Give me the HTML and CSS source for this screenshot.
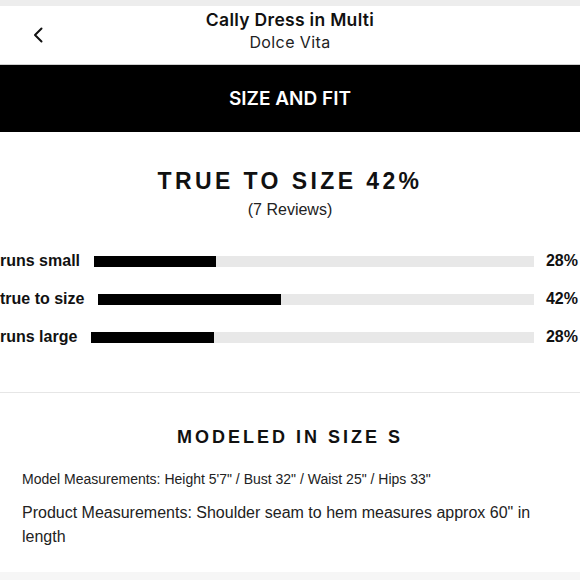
FILE: index.html
```html
<!DOCTYPE html>
<html lang="en">
<head>
<meta charset="utf-8">
<title>Size and Fit</title>
<link rel="stylesheet" href="styles.css">
</head>
<body>
<div class="page">
  <div class="top-strip"></div>
  <header class="header">
    <button class="back" aria-label="Back">
      <svg width="12" height="16" viewBox="0 0 12 16"><path d="M9.5 1.5 L3 8 L9.5 14.5" fill="none" stroke="#111" stroke-width="2" stroke-linecap="round" stroke-linejoin="round"/></svg>
    </button>
    <div class="titles">
      <div class="title">Cally Dress in Multi</div>
      <div class="brand">Dolce Vita</div>
    </div>
  </header>
  <div class="banner">SIZE AND FIT</div>

  <section class="fit">
    <h2 class="heading">TRUE TO SIZE 42%</h2>
    <div class="reviews">(7 Reviews)</div>
    <div class="rows">
      <div class="row">
        <span class="label">runs small</span>
        <div class="track"><div class="fill" style="width:27.8%"></div></div>
        <span class="pct">28%</span>
      </div>
      <div class="row">
        <span class="label">true to size</span>
        <div class="track"><div class="fill" style="width:41.8%"></div></div>
        <span class="pct">42%</span>
      </div>
      <div class="row">
        <span class="label">runs large</span>
        <div class="track"><div class="fill" style="width:27.8%"></div></div>
        <span class="pct">28%</span>
      </div>
    </div>
  </section>

  <section class="model">
    <h2 class="heading small">MODELED IN SIZE S</h2>
    <p class="model-meas">Model Measurements: Height 5'7" / Bust 32" / Waist 25" / Hips 33"</p>
    <p class="prod-meas">Product Measurements: Shoulder seam to hem measures approx 60" in length</p>
  </section>
  <div class="bottom-strip"></div>
</div>
</body>
</html>
```

FILE: styles.css
```css
* { box-sizing: border-box; }
html, body { margin: 0; padding: 0; background: #fff; }
body { font-family: "Liberation Sans", Arial, sans-serif; color: #111; }
.page { width: 580px; height: 580px; overflow: hidden; display: flex; flex-direction: column; }

.top-strip { height: 6px; background: #ededed; flex: none; }

.header {
  height: 59px;
  flex: none;
  display: flex;
  align-items: center;
  justify-content: center;
  border-bottom: 1px solid #cfcfcf;
  position: relative;
}
.back {
  position: absolute;
  left: 31px;
  top: 20px;
  width: 14px;
  height: 18px;
  padding: 0;
  border: 0;
  background: none;
  display: flex;
  align-items: center;
  justify-content: center;
}
.titles { text-align: center; margin-top: -8px; }
.title {
  font-family: Inter, "Noto Sans", sans-serif;
  font-weight: 600;
  font-size: 17.5px;
  line-height: 22px;
  letter-spacing: 0.3px;
  color: #111;
}
.brand {
  font-family: Inter, "Noto Sans", sans-serif;
  font-weight: 400;
  font-size: 16px;
  line-height: 22px;
  letter-spacing: 0.4px;
  color: #222;
}

.banner {
  height: 67px;
  flex: none;
  background: #000;
  color: #fff;
  display: flex;
  align-items: center;
  justify-content: center;
  font-family: Inter, "Noto Sans", sans-serif;
  font-weight: 600;
  font-size: 19px;
}

.fit { padding-top: 35px; padding-bottom: 36px; border-bottom: 1px solid #e6e6e6; flex: none; }
.heading {
  margin: 0;
  text-align: center;
  font-size: 23px;
  line-height: 28px;
  font-weight: 700;
  letter-spacing: 3.4px;
  color: #111;
}
.reviews {
  margin-top: 5px;
  text-align: center;
  font-size: 16px;
  line-height: 20px;
  color: #222;
}
.rows { margin-top: 22px; display: flex; flex-direction: column; }
.row {
  height: 38px;
  display: flex;
  align-items: center;
  gap: 14px;
  padding-right: 2px;
}
.label, .pct { font-size: 16px; font-weight: 700; color: #111; white-space: nowrap; }
.pct { margin-left: -2px; }
.track { flex: 1; height: 11px; background: #e8e8e8; margin-top: 1px; }
.fill { height: 100%; background: #000; }

.model { padding: 32px 22px 0; flex: 1; }
.heading.small { font-size: 18px; line-height: 24px; letter-spacing: 3px; }
.model-meas { margin: 20px 0 0; font-size: 14px; line-height: 20px; color: #222; }
.prod-meas { margin: 12px 0 0; font-size: 16px; line-height: 24px; color: #222; }

.bottom-strip { height: 8px; background: #f6f6f6; flex: none; }
```
